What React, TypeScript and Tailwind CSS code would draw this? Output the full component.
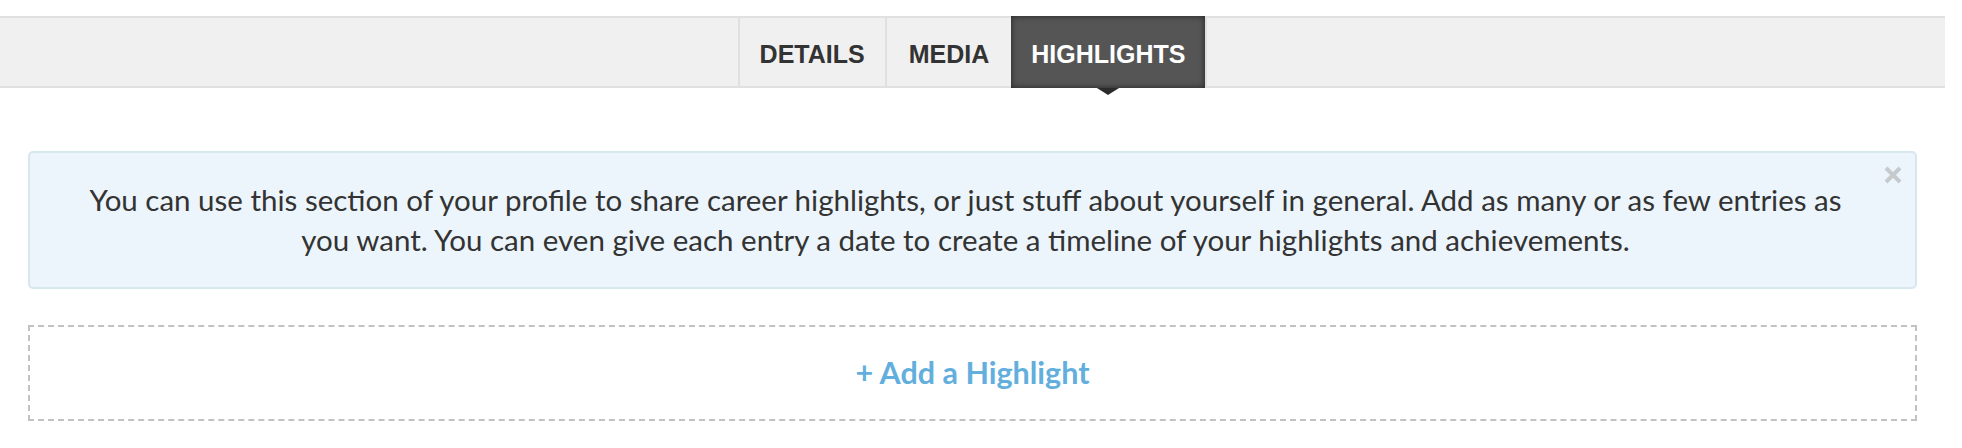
const tabs = [
  { label: "DETAILS", pad: "px-[20px]" },
  { label: "MEDIA", pad: "px-[22px]" },
  { label: "HIGHLIGHTS", pad: "px-[20px]" },
];

function CloseIcon() {
  return (
    <svg width="20" height="20" viewBox="0 0 20 20" fill="none">
      <path d="M3 3 L17 17 M17 3 L3 17" stroke="#c6cacd" strokeWidth="4" strokeLinecap="butt" />
    </svg>
  );
}

export default function App() {
  const active = "HIGHLIGHTS";
  return (
    <div className="w-[1945px] bg-white pt-[16px] pb-[28px] font-['Lato',sans-serif]">
      {/* Tab bar */}
      <div className="h-[72px] bg-[#f0f0f0] border-y-2 border-[#e0e0e0] flex justify-center">
        {tabs.map(({ label, pad }) => {
          const on = label === active;
          return (
            <div
              key={label}
              className={
                on
                  ? `relative -my-[2px] h-[72px] ${pad} flex items-center bg-[#555555] shadow-[inset_0_0_6px_rgba(0,0,0,0.6)] border-r-2 border-[#e0e0e0]`
                  : `h-[68px] ${pad} flex items-center border-l-2 border-[#e0e0e0]`
              }
            >
              <span
                className={`pt-[4px] text-[25px] font-bold font-['Liberation_Sans',Arial,sans-serif] leading-none ${
                  on ? "text-white" : "text-[#333333]"
                }`}
              >
                {label}
              </span>
              {on && (
                <span className="absolute left-1/2 -translate-x-1/2 top-full w-0 h-0 border-l-[11px] border-r-[11px] border-t-[7px] border-l-transparent border-r-transparent border-t-[#2b2b2b]" />
              )}
            </div>
          );
        })}
      </div>

      {/* Info notice */}
      <div className="relative mx-[28px] mt-[63px] rounded-[5px] border-2 border-[#d6e7f0] bg-[#ecf5fb] pl-[30px] pr-[44px] py-[27px] text-center text-[29.5px] leading-[40px] text-[#333333]">
        You can use this section of your profile to share career highlights, or just stuff about yourself in general. Add as many or as few entries as
        <br />
        you want. You can even give each entry a date to create a timeline of your highlights and achievements.
        <button className="absolute top-[12px] right-[12px] p-0">
          <CloseIcon />
        </button>
      </div>

      {/* Add highlight */}
      <div className="mx-[28px] mt-[36px] h-[96px] border-2 border-dashed border-[#c2c2c2] flex items-center justify-center">
        <span className="text-[30.5px] font-bold text-[#62afdd]">+ Add a Highlight</span>
      </div>
    </div>
  );
}
